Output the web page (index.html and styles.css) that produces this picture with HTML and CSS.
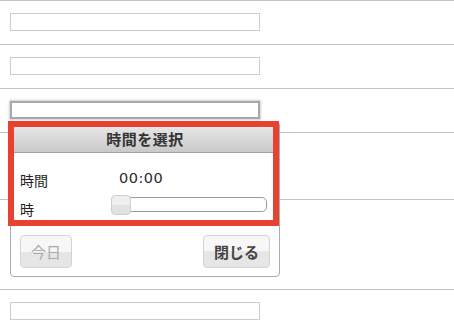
FILE: index.html
```html
<!DOCTYPE html>
<html lang="ja">
<head>
<meta charset="utf-8">
<link rel="stylesheet" href="styles.css">
</head>
<body>
<div class="list">
  <div class="row r44"><input class="field" type="text"></div>
  <div class="row r44"><input class="field" type="text"></div>
  <div class="row r44"><input class="field focused" type="text"></div>
  <div class="row r67"></div>
  <div class="row r90"></div>
  <div class="row r44"><input class="field" type="text"></div>
</div>

<div class="picker">
  <div class="picker-head">時間を選択</div>
  <div class="picker-body">
    <div class="prow">
      <span class="plabel">時間</span>
      <span class="pvalue">00:00</span>
    </div>
    <div class="prow">
      <span class="plabel second">時</span>
      <div class="slider"><div class="handle"></div></div>
    </div>
  </div>
  <div class="picker-foot">
    <button class="btn disabled">今日</button>
    <button class="btn">閉じる</button>
  </div>
</div>
<div class="highlight"></div>
</body>
</html>
```

FILE: styles.css
```css
html, body {
  margin: 0;
  padding: 0;
  background: #fff;
  font-family: "Noto Sans CJK JP", "Noto Sans", sans-serif;
  color: #333;
}
.list {
  display: flex;
  flex-direction: column;
}
.row {
  border-top: 1px solid #c4c4c4;
  box-sizing: border-box;
  padding: 12px 10px 0;
}
.r44 { height: 44px; }
.r67 { height: 67px; }
.r90 { height: 90px; }
.field {
  display: block;
  box-sizing: border-box;
  width: 250px;
  height: 18px;
  margin: 0;
  border: 1px solid #cdcdcd;
  background: #fff;
  padding: 0;
  outline: none;
}
.field.focused {
  border: 2px solid #a8a8a8;
  box-shadow: 0 0 2px 1px #cfcfcf;
}
.picker {
  position: absolute;
  left: 10px;
  top: 121px;
  width: 270px;
  height: 156px;
  box-sizing: border-box;
  border: 1px solid #acacac;
  border-radius: 4px;
  background: #fff;
  display: flex;
  flex-direction: column;
}
.picker-head {
  height: 31px;
  box-sizing: border-box;
  border-bottom: 1px solid #a0a0a0;
  background: linear-gradient(#ececec, #c9c9c9);
  border-radius: 3px 3px 0 0;
  text-align: center;
  font-weight: bold;
  font-size: 15px;
  line-height: 34px;
  color: #333;
  letter-spacing: 0.5px;
}
.picker-body {
  padding: 13px 9px 0;
  height: 74px;
  box-sizing: border-box;
  display: flex;
  flex-direction: column;
}
.prow {
  display: flex;
  align-items: center;
  height: 28px;
}
.plabel {
  width: 92px;
  font-size: 14px;
  color: #222;
  position: relative;
  top: 0;
}
.plabel.second {
  top: 1px;
}
.pvalue {
  font-family: "DejaVu Sans", sans-serif;
  font-size: 14.5px;
  color: #2a2a2a;
  padding-left: 7px;
  position: relative;
  top: -2px;
  letter-spacing: 0.5px;
}
.slider {
  position: relative;
  width: 156px;
  height: 15px;
  box-sizing: border-box;
  border: 1px solid #9c9c9c;
  border-radius: 5px;
  background: #fff;
  top: -4px;
  margin-left: -1px;
}
.handle {
  position: absolute;
  left: -1px;
  top: -3px;
  width: 20px;
  height: 20px;
  box-sizing: border-box;
  border: 1px solid #cfcfcf;
  border-radius: 4px;
  background: linear-gradient(#efefef 50%, #e2e2e2 50%);
}
.picker-foot {
  flex: 1;
  display: flex;
  justify-content: space-between;
  align-items: flex-start;
  padding: 8px 9px 0;
}
.btn {
  height: 33px;
  box-sizing: border-box;
  border: 1px solid #d4d4d4;
  border-radius: 4px;
  background: linear-gradient(#f7f7f7 50%, #e6e6e6 50%);
  font-family: "Noto Sans CJK JP", sans-serif;
  font-size: 15px;
  color: #444;
  font-weight: bold;
  padding: 0 10px;
  margin: 0;
}
.btn.disabled {
  width: 52px;
  color: #aaa;
  font-weight: normal;
}
.highlight {
  position: absolute;
  left: 8px;
  top: 121px;
  width: 271px;
  height: 105px;
  box-sizing: border-box;
  border: 6px solid #e8412f;
}
```
